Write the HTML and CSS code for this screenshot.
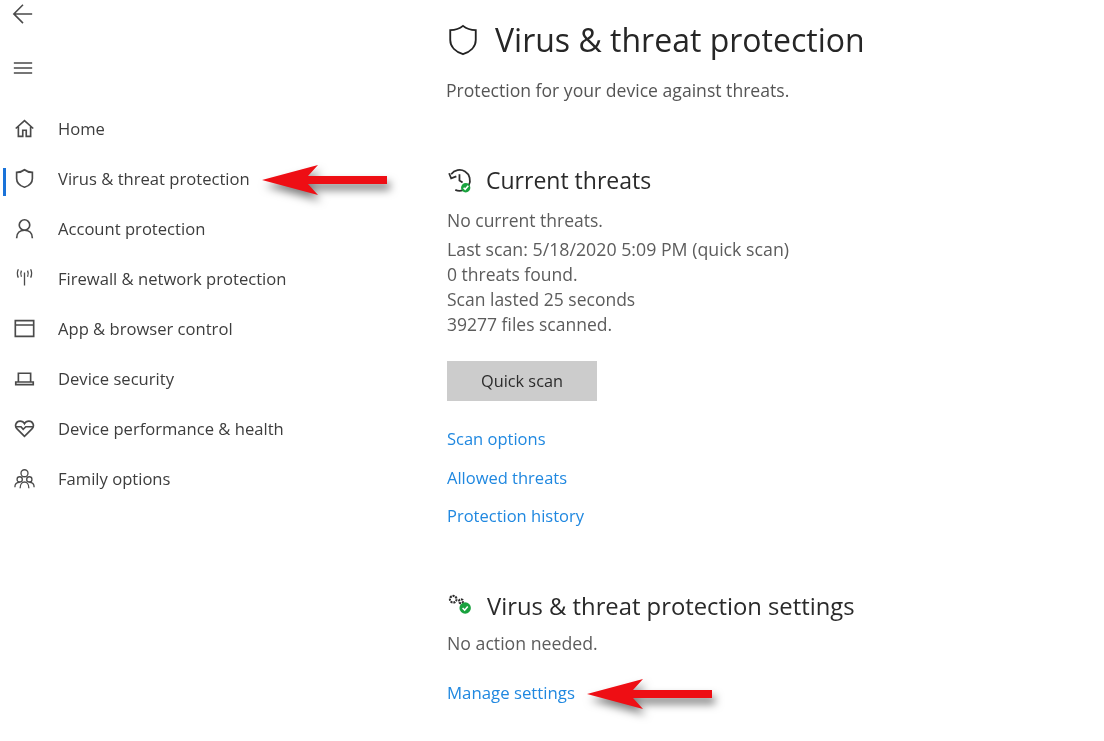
FILE: index.html
```html
<!DOCTYPE html>
<html lang="en">
<head>
<meta charset="utf-8">
<title>Virus &amp; threat protection</title>
<link rel="stylesheet" href="styles.css">
</head>
<body>
<div class="app">
  <aside class="sidebar">
    <div class="top-btn back">
      <svg class="ico" viewBox="0 0 24 24"><path d="M2 13H22M12 3 2 13 12 23"/></svg>
    </div>
    <div class="top-btn menu">
      <svg class="ico" viewBox="0 0 24 24"><path d="M2 6.500H22M2 12H22M2 17.500H22"/></svg>
    </div>
    <nav class="nav">
      <div class="nav-item"><svg class="ico" viewBox="0 0 24 24"><path d="M2 12 12 3 22 12M5 10V21H10V14H14V21H19V10"/></svg><span>Home</span></div>
      <div class="nav-item active"><svg class="ico" viewBox="0 0 24 24"><path d="M12 2C9 4.500 6 5 3 5V12C3 17 7 20.500 12 22 17 20.500 21 17 21 12V5C18 5 15 4.500 12 2Z"/></svg><span>Virus &amp; threat protection</span></div>
      <div class="nav-item"><svg class="ico" viewBox="0 0 24 24"><circle cx="12" cy="8" r="6"/><path d="M3 23C3 17 7 14 12 14S21 17 21 23"/></svg><span>Account protection</span></div>
      <div class="nav-item"><svg class="ico ico-thin" viewBox="0 0 24 24"><path d="M12 5V20M8.500 3C7.500 5 7.500 7.500 8.500 10M15.500 3C16.500 5 16.500 7.500 15.500 10M5 1.500C3.500 4.500 3.500 8 5 11M19 1.500C20.500 4.500 20.500 8 19 11"/></svg><span>Firewall &amp; network protection</span></div>
      <div class="nav-item"><svg class="ico" viewBox="0 0 24 24"><path d="M1.500 3H22.500V21H1.500ZM1.500 8H22.500"/></svg><span>App &amp; browser control</span></div>
      <div class="nav-item"><svg class="ico" viewBox="0 0 24 24"><path d="M5 16V6H19V16M2 16H22V19H2Z"/></svg><span>Device security</span></div>
      <div class="nav-item"><svg class="ico" viewBox="0 0 24 24"><path d="M12 21 3.500 12.500C0 9 2.500 3.500 7 3.500 9 3.500 11 4.500 12 6.500 13 4.500 15 3.500 17 3.500 21.500 3.500 24 9 20.500 12.500ZM2 10H8L10.500 13 13.500 10H22"/></svg><span>Device performance &amp; health</span></div>
      <div class="nav-item"><svg class="ico ico-thin" viewBox="0 0 24 24"><circle cx="12" cy="6" r="4"/><circle cx="6.500" cy="13" r="3"/><circle cx="17.500" cy="13" r="3"/><path d="M1 22C1 18 3 16.500 6.500 16.500M23 22C23 18 21 16.500 17.500 16.500M7 23C7 18.500 9.500 16 12 16S17 18.500 17 23"/></svg><span>Family options</span></div>
    </nav>
  </aside>

  <main class="content">
    <header class="page-head">
      <svg class="ico head-ico" viewBox="0 0 24 24"><path d="M12 2C9 4.500 6 5 3 5V12C3 17 7 20.500 12 22 17 20.500 21 17 21 12V5C18 5 15 4.500 12 2Z"/></svg>
      <h1>Virus &amp; threat protection</h1>
    </header>
    <p class="sub">Protection for your device against threats.</p>

    <section class="threats">
      <div class="sec-head">
        <svg class="sec-ico" viewBox="0 0 26 26"><path class="ln" d="M4 7A10 10 0 1 1 8 22M2 6 4 11 9 9M12 7V13L15 15"/><circle class="ok" cx="18" cy="20" r="4.500"/><path class="tick" d="M16 20 17.500 21.500 20.500 18"/></svg>
        <h2>Current threats</h2>
      </div>
      <p class="line first">No current threats.</p>
      <p class="line scan">Last scan: 5/18/2020 5:09 PM (quick scan)</p>
      <p class="line">0 threats found.</p>
      <p class="line">Scan lasted 25 seconds</p>
      <p class="line">39277 files scanned.</p>
      <button class="btn">Quick scan</button>
      <div class="links">
        <a href="#">Scan options</a>
        <a href="#">Allowed threats</a>
        <a href="#">Protection history</a>
      </div>
    </section>

    <section class="settings">
      <div class="sec-head">
        <svg class="sec-ico" viewBox="0 0 26 26"><circle class="ln gear" cx="6" cy="6" r="3.200"/><circle class="ln gear" cx="13.500" cy="8" r="2"/><circle class="ok" cx="17.500" cy="14.500" r="5.500"/><path class="tick" d="M15 14.500 17 16.500 20 13"/></svg>
        <h2 class="long">Virus &amp; threat protection settings</h2>
      </div>
      <p class="line action">No action needed.</p>
      <a class="manage" href="#">Manage settings</a>
    </section>
  </main>
</div>

<svg class="arrow arrow-nav" viewBox="0 0 140 50"><path d="M2 20 58 5 48 16H127V24H48L58 35Z"/></svg>
<svg class="arrow arrow-manage" viewBox="0 0 140 50"><path d="M2 20 58 5 48 16H127V24H48L58 35Z"/></svg>
</body>
</html>
```
FILE: styles.css
```css
* { box-sizing: border-box; }
html, body { margin: 0; height: 100%; }
body {
  width: 1104px;
  height: 741px;
  overflow: hidden;
  position: relative;
  background: #fff;
  font-family: "Open Sans", "Noto Sans", sans-serif;
  font-size: 16.600px;
  color: #444;
}
.app { display: flex; height: 100%; filter: blur(.35px); }
.sidebar { width: 447px; flex: none; }
.ico { width: 22px; height: 22px; fill: none; stroke: #4a4a4a; stroke-width: 1.700; flex: none; }
.top-btn { padding-left: 12px; display: flex; align-items: center; }
.back { height: 26px; }
.menu { height: 62px; padding-top: 22px; }
.nav { margin-top: 15px; }
.nav-item { height: 50px; display: flex; align-items: center; padding-left: 14px; gap: 23px; position: relative; color: #3d3d3d; }
.nav-item .ico { width: 21px; height: 21px; stroke-width: 1.900; }
.nav-item .ico-thin { stroke-width: 1.500; }
.active::before { content: ""; position: absolute; left: 3px; top: 15px; width: 2.500px; height: 28px; background: #1a73d9; }
.content { flex: 1; padding-top: 18px; }
.page-head { display: flex; align-items: center; gap: 15px; height: 44px; }
.head-ico { width: 34px; height: 34px; stroke: #222; stroke-width: 1.300; margin-left: -1px; }
h1 { margin: 0; font-size: 32px; font-weight: 400; color: #262626; line-height: 44px; }
.sub { margin: 16px 0 0 -1px; color: #555; font-size: 17.600px; line-height: 24px; }
.sec-head { display: flex; align-items: center; gap: 12px; height: 30px; }
.sec-ico { width: 27px; height: 27px; flex: none; }
.ln { fill: none; stroke: #2e2e2e; stroke-width: 1.700; }
.gear { stroke-width: 2; stroke-dasharray: 2 .8; }
.ok { fill: #19a23e; }
.tick { fill: none; stroke: #fff; stroke-width: 1.500; }
h2 { margin: 0; font-size: 23px; font-weight: 400; color: #2a2a2a; line-height: 30px; }
h2.long { font-size: 23.800px; }
.threats { margin-top: 63px; }
.line { margin: 0; line-height: 25px; color: #5c5c5c; font-size: 17.500px; }
.line.scan { font-size: 17.750px; }
.first { margin-top: 13px; margin-bottom: 4px; }
.btn {
  display: block;
  margin-top: 24px;
  width: 150px;
  height: 40px;
  border: 0;
  background: #cccccc;
  color: #2b2b2b;
  font-family: inherit;
  font-size: 16.300px;
}
.links { margin-top: 26px; display: flex; flex-direction: column; gap: 14.500px; align-items: flex-start; font-size: 16.500px; }
a { color: #2088e0; text-decoration: none; line-height: 24px; }
.settings { margin-top: 63px; }
.settings .sec-head { gap: 13px; }
.line.action { margin-top: 10px; font-size: 17.700px; }
.manage { display: block; margin-top: 25px; font-size: 16.800px; }
.arrow {
  position: absolute;
  width: 140px;
  height: 50px;
  overflow: visible;
  fill: #ee0e14;
  filter: drop-shadow(3px 6px 4px rgba(0, 0, 0, .5));
}
.arrow-nav { left: 260px; top: 160px; }
.arrow-manage { left: 585px; top: 674px; }
```
